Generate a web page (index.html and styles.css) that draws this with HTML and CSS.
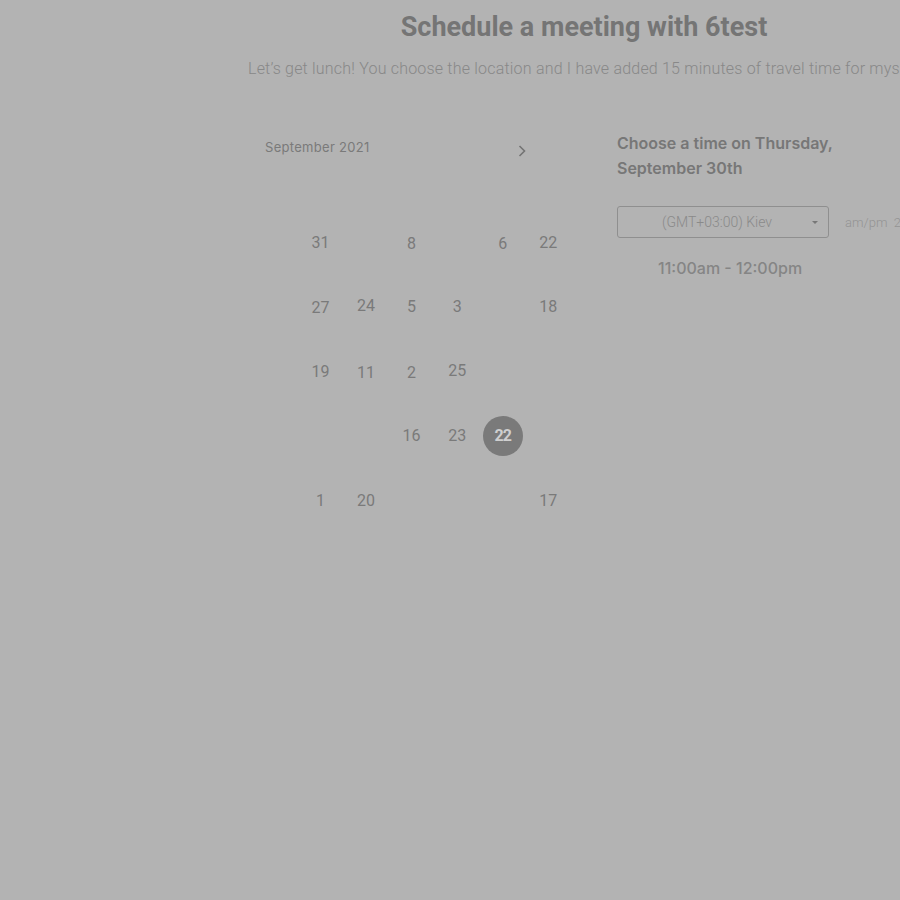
FILE: index.html
```html
<!DOCTYPE html>
<html>
<head>
<meta charset="utf-8">
<link rel="stylesheet" href="styles.css">
</head>
<body>
<div class="page">
  <h1 class="title">Schedule a meeting with 6test</h1>
  <p class="subtitle">Let’s get lunch! You choose the location and I have added 15 minutes of travel time for myself.</p>
  <div class="main">
    <div class="calendar">
      <div class="cal-head">
        <span class="month">September 2021</span>
        <svg class="chev" width="10" height="14" viewBox="0 0 10 14"><path d="M2.5 2 L7.5 7 L2.5 12" fill="none" stroke="#747474" stroke-width="1.6"/></svg>
      </div>
      <div class="grid">
        <span></span><span>31</span><span></span><span class="lo">8</span><span></span><span class="lo">6</span><span>22</span>
        <span></span><span class="lo">27</span><span class="hi">24</span><span>5</span><span>3</span><span></span><span>18</span>
        <span></span><span>19</span><span class="lo">11</span><span class="lo">2</span><span class="hi">25</span><span></span><span></span>
        <span></span><span></span><span></span><span>16</span><span>23</span><span><b class="sel">22</b></span><span></span>
        <span></span><span>1</span><span>20</span><span></span><span></span><span></span><span>17</span>
      </div>
    </div>
    <div class="times">
      <h2 class="choose">Choose a time on Thursday,<br>September 30th</h2>
      <div class="tz-row">
        <div class="select"><span class="tz">(GMT+03:00) Kiev</span><span class="caret"></span></div>
        <span class="ampm">am/pm&nbsp;&nbsp;24h</span>
      </div>
      <div class="slot">11:00am - 12:00pm</div>
    </div>
  </div>
</div>
</body>
</html>
```

FILE: styles.css
```css
html, body {
  margin: 0;
  padding: 0;
  background: #b3b3b3;
  overflow: hidden;
  height: 900px;
}
.page {
  width: 680px;
  margin-left: 248px;
  font-family: Roboto, "Liberation Sans", sans-serif;
}
.title {
  margin: 11px 0 0;
  width: 672px;
  text-align: center;
  font-size: 27px;
  line-height: 32px;
  font-weight: 700;
  color: #757575;
}
.subtitle {
  margin: 16px 0 0;
  white-space: nowrap;
  font-size: 16px;
  line-height: 20px;
  font-weight: 300;
  color: #888;
  letter-spacing: 0.2px;
}
.main {
  display: flex;
  margin-top: 52px;
  gap: 46px;
}
.calendar {
  width: 319px;
  margin-left: 4px;
  padding-top: 6px;
}
.cal-head {
  display: flex;
  align-items: center;
  justify-content: space-between;
  height: 20px;
  padding-left: 13px;
  padding-right: 44px;
}
.month {
  font-family: Inter, "Noto Sans", sans-serif;
  font-size: 13px;
  font-weight: 400;
  color: #7a7a7a;
  letter-spacing: 0.3px;
}
.chev {
  margin-top: 8px;
}
.grid {
  margin-top: 53px;
  display: grid;
  grid-template-columns: repeat(7, 45.6px);
  grid-auto-rows: 64.5px;
}
.grid span {
  display: flex;
  align-items: center;
  justify-content: center;
  font-size: 16px;
  color: #7a7a7a;
}
.grid span.lo { padding-top: 2px; }
.grid span.hi { padding-bottom: 2px; }
.sel {
  width: 40px;
  height: 40px;
  border-radius: 50%;
  background: #7a7a7a;
  color: #cfcfcf;
  display: flex;
  align-items: center;
  justify-content: center;
  font-weight: 700;
  font-size: 16px;
  letter-spacing: -1px;
}
.times {
  width: 300px;
}
.choose {
  margin: 0;
  font-family: Inter, "Noto Sans", sans-serif;
  font-size: 16px;
  line-height: 25px;
  font-weight: 600;
  color: #777;
}
.tz-row {
  display: flex;
  align-items: center;
  gap: 16px;
  margin-top: 25px;
}
.select {
  box-sizing: border-box;
  width: 212px;
  height: 32px;
  border: 1px solid #8f8f8f;
  border-radius: 3px;
  display: flex;
  align-items: center;
  position: relative;
}
.tz {
  flex: 1;
  text-align: center;
  padding-left: 4px;
  font-size: 14px;
  font-weight: 300;
  color: #8a8a8a;
}
.caret {
  width: 0;
  height: 0;
  border-left: 3px solid transparent;
  border-right: 3px solid transparent;
  border-top: 3px solid #777;
  margin-right: 10px;
}
.ampm {
  font-size: 13px;
  font-weight: 300;
  color: #939393;
  white-space: nowrap;
}
.slot {
  margin-top: 20px;
  padding-left: 41px;
  font-family: Inter, "Noto Sans", sans-serif;
  font-size: 16px;
  line-height: 20px;
  font-weight: 500;
  color: #858585;
}
```
